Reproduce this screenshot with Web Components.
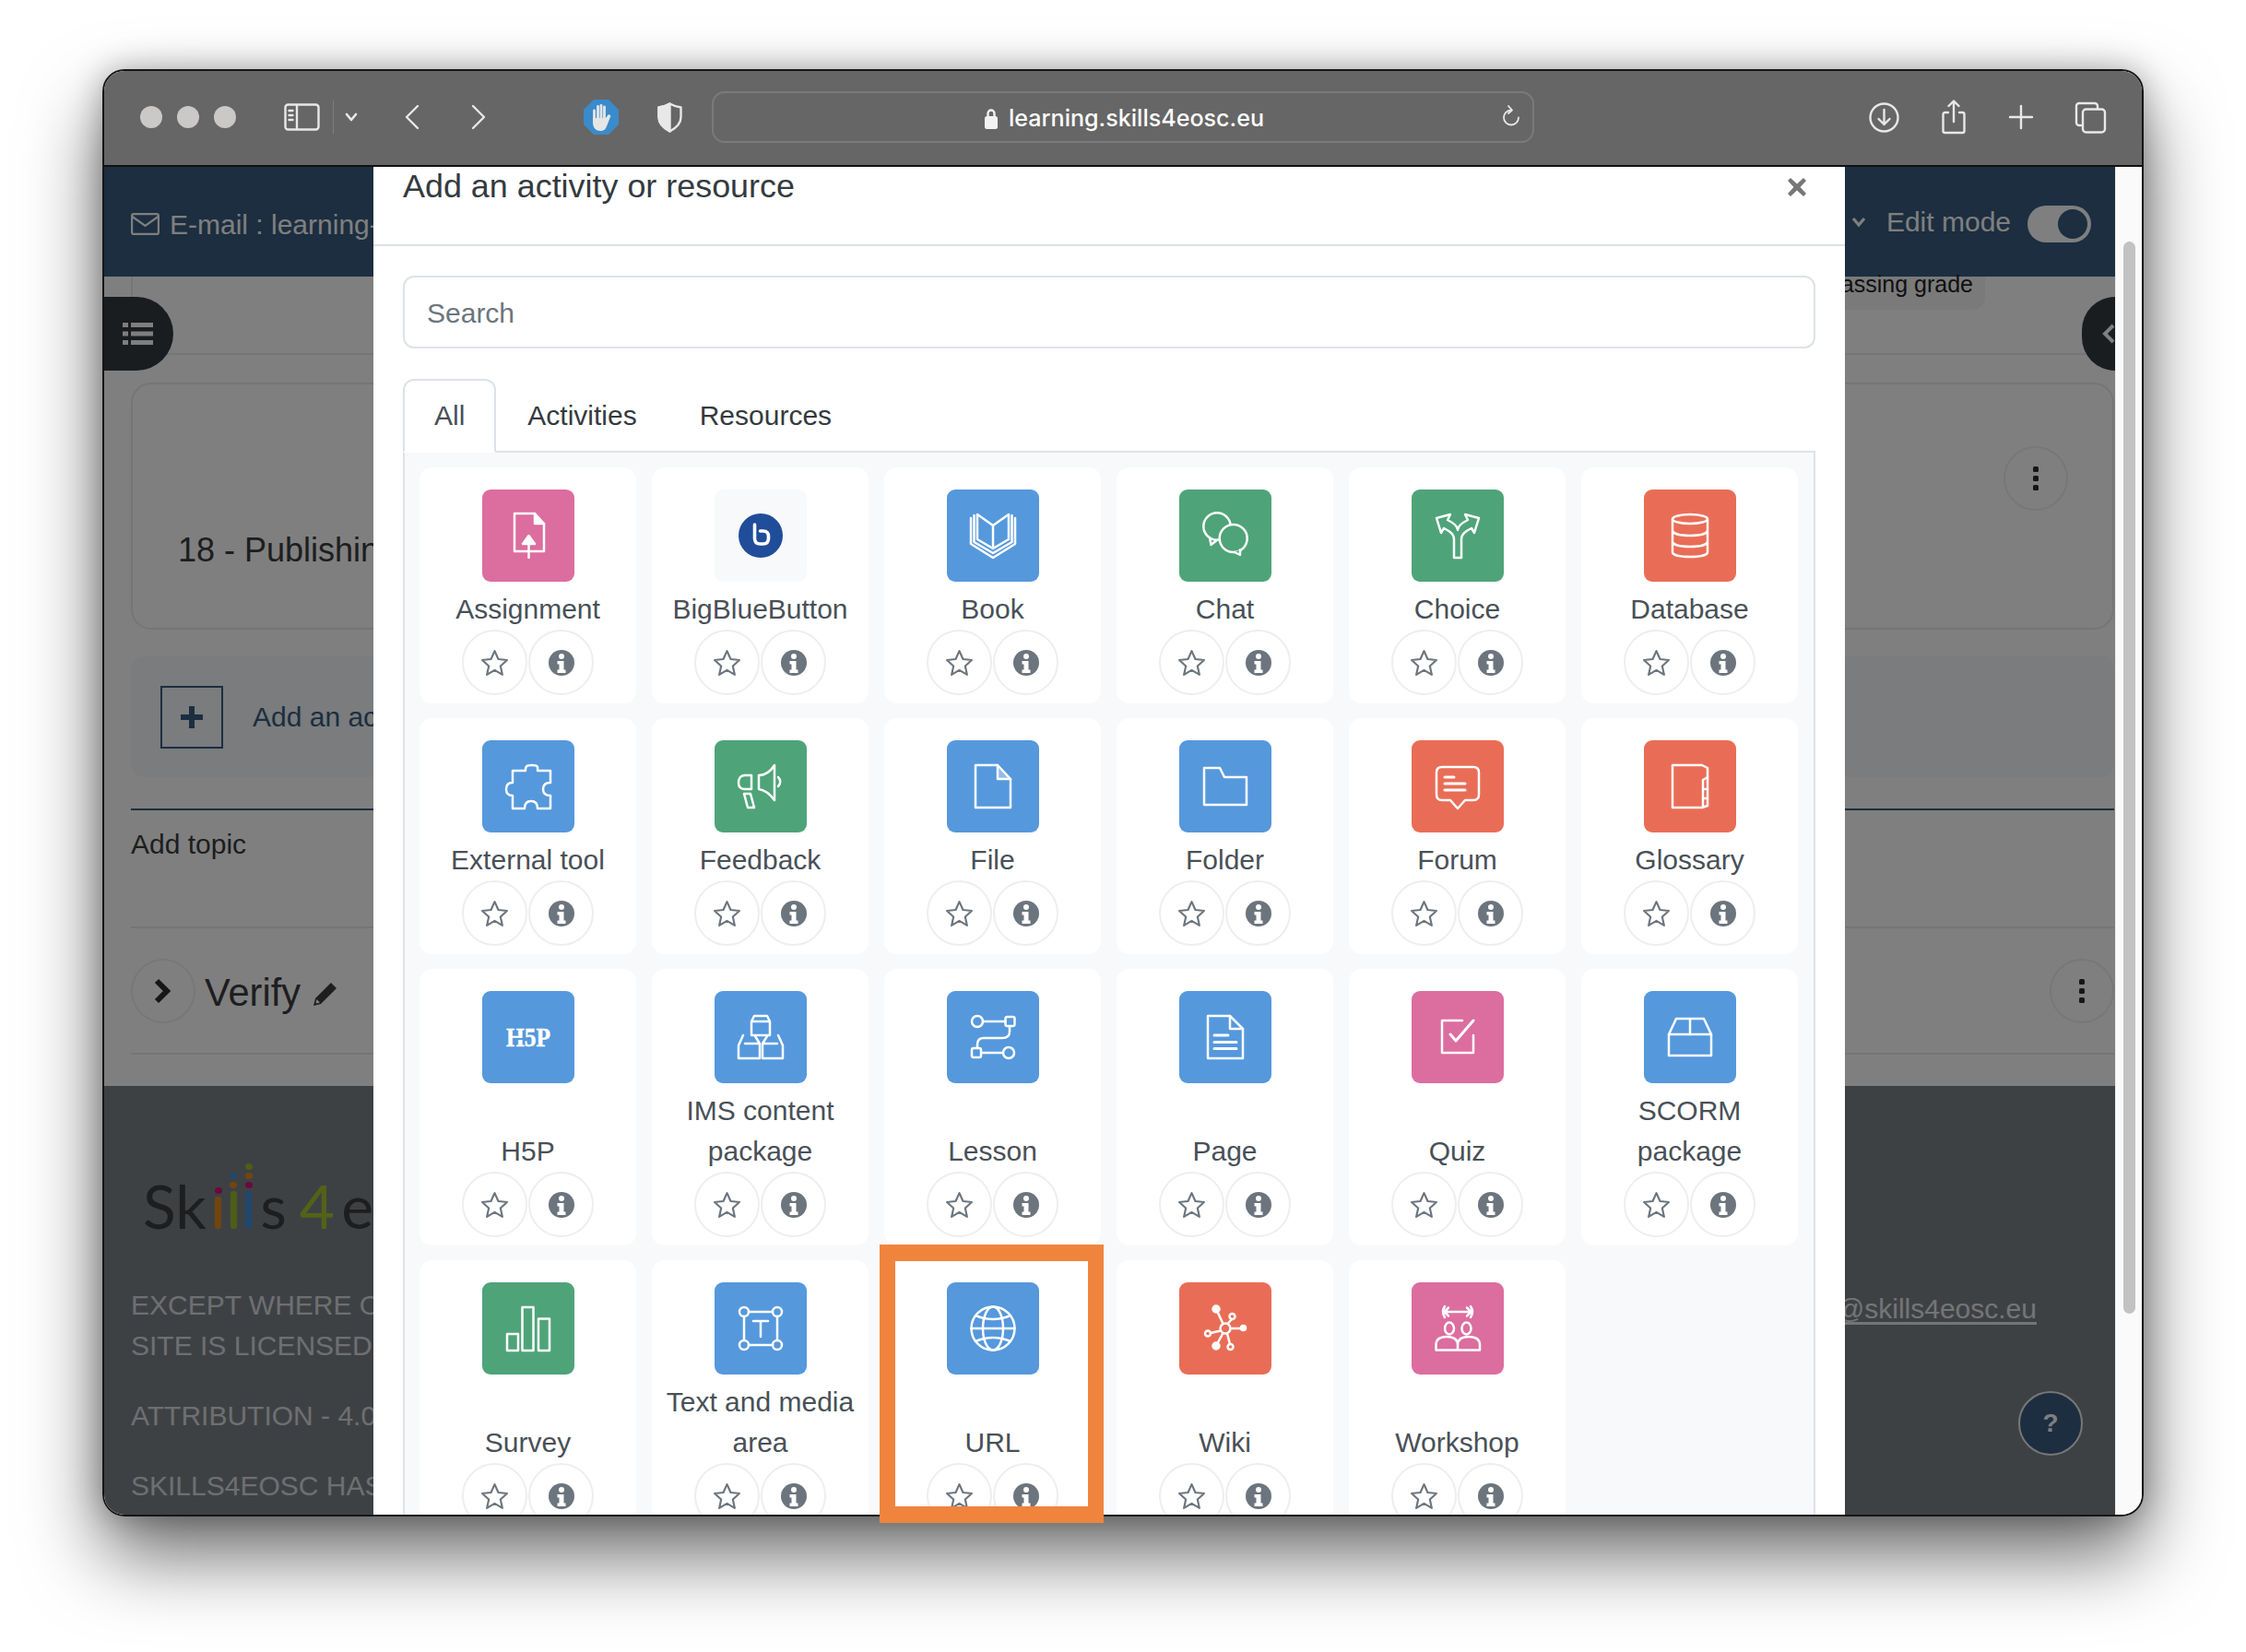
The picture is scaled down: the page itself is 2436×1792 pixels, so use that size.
<!DOCTYPE html>
<html>
<head>
<meta charset="utf-8">
<title>Add an activity or resource</title>
<style>
  html, body { margin: 0; height: 100%; overflow: hidden; background: #fff; font-family: "Liberation Sans", Arial, sans-serif; }
</style>
</head>
<body>
<mac-window>
  <browser-toolbar slot="toolbar" url="learning.skills4eosc.eu"></browser-toolbar>
  <course-page slot="page"></course-page>
  <activity-modal slot="modal">
    <activity-card name="Assignment" color="pink" icon="assignment"></activity-card>
    <activity-card name="BigBlueButton" color="plain" icon="bbb"></activity-card>
    <activity-card name="Book" color="blue" icon="book"></activity-card>
    <activity-card name="Chat" color="green" icon="chat"></activity-card>
    <activity-card name="Choice" color="green" icon="choice"></activity-card>
    <activity-card name="Database" color="coral" icon="database"></activity-card>
    <activity-card name="External tool" color="blue" icon="puzzle"></activity-card>
    <activity-card name="Feedback" color="green" icon="feedback"></activity-card>
    <activity-card name="File" color="blue" icon="file"></activity-card>
    <activity-card name="Folder" color="blue" icon="folder"></activity-card>
    <activity-card name="Forum" color="coral" icon="forum"></activity-card>
    <activity-card name="Glossary" color="coral" icon="glossary"></activity-card>
    <activity-card name="H5P" color="blue" icon="h5p"></activity-card>
    <activity-card name="IMS content package" color="blue" icon="ims"></activity-card>
    <activity-card name="Lesson" color="blue" icon="lesson"></activity-card>
    <activity-card name="Page" color="blue" icon="page"></activity-card>
    <activity-card name="Quiz" color="pink" icon="quiz"></activity-card>
    <activity-card name="SCORM package" color="blue" icon="scorm"></activity-card>
    <activity-card name="Survey" color="green" icon="survey"></activity-card>
    <activity-card name="Text and media area" color="blue" icon="textarea"></activity-card>
    <activity-card name="URL" color="blue" icon="url"></activity-card>
    <activity-card name="Wiki" color="coral" icon="wiki"></activity-card>
    <activity-card name="Workshop" color="pink" icon="workshop"></activity-card>
  </activity-modal>
  <highlight-box slot="overlay"></highlight-box>
</mac-window>

<script>
const SANS = '"Liberation Sans", Arial, sans-serif'

class MacWindow extends HTMLElement {
  constructor() {
    super()
    let shadow = this.attachShadow({ mode: 'open' })
    shadow.innerHTML = `
    <style>
      :host { display: block; position: relative; box-sizing: border-box; width: 2214px; height: 1570px; margin: 75px 0 0 111px; }
      .frame { position: relative; box-sizing: border-box; width: 100%; height: 100%; border: 2px solid #161616; border-radius: 24px; overflow: hidden;
        display: flex; flex-direction: column; background: #fafafa; }
      .shadow { position: absolute; inset: 0; border-radius: 24px; box-shadow: 0 42px 84px rgba(0,0,0,.58), 0 0 34px rgba(0,0,0,.28); }
      .content { flex: 1; min-height: 0; display: flex; position: relative; }
      .view { flex: 1; min-width: 0; position: relative; overflow: hidden; }
      .backdrop { position: absolute; inset: 0; background: rgba(0,0,0,.5); }
      .bar { width: 29px; background: #fafafa; border-left: 1px solid #ececec; box-sizing: border-box; padding: 81px 0 0 8px; }
      .thumb { width: 13px; height: 1163px; border-radius: 7px; background: #c2c2c2; }
      ::slotted([slot=overlay]) { position: absolute; left: 843px; top: 1275px; }
    </style>
    <div class="shadow"></div>
    <div class="frame">
      <slot name="toolbar"></slot>
      <div class="content">
        <div class="view">
          <slot name="page"></slot>
          <div class="backdrop"></div>
          <slot name="modal"></slot>
        </div>
        <div class="bar"><div class="thumb"></div></div>
      </div>
    </div>
    <slot name="overlay"></slot>
    `
  }
}
customElements.define('mac-window', MacWindow)

class BrowserToolbar extends HTMLElement {
  constructor() {
    super()
    this.attachShadow({ mode: 'open' })
  }

  connectedCallback() {
    let url = this.getAttribute('url')
    this.shadowRoot.innerHTML = `
    <style>
      :host { display: block; flex: none; }
      .bar { box-sizing: border-box; height: 104px; background: #666; border-bottom: 2px solid #111; display: flex; align-items: center; padding: 0 0 2px 39px; }
      .dot { width: 24px; height: 24px; border-radius: 50%; background: #cbc8c8; margin-right: 16px; flex: none; }
      svg { flex: none; display: block; fill: none; stroke: #e8e8e8; stroke-width: 2.4; stroke-linecap: round; stroke-linejoin: round; }
      .div { width: 1px; height: 36px; background: #7d7d7d; margin-left: 14px; }
      .url { flex: none; margin-left: 32px; box-sizing: border-box; width: 892px; height: 56px; border: 2px solid #7a7a7a; border-radius: 14px;
        position: relative; display: flex; align-items: center; justify-content: center; gap: 12px; padding: 2px 0 0 3px; }
      .url span { font: 500 25.100px Inter, ${SANS}; color: #fff; white-space: nowrap; }
      .url svg.reload { position: absolute; right: 13px; top: 13px; }
    </style>
    <div class="bar">
      <div class="dot"></div><div class="dot"></div><div class="dot" style="margin-right:0"></div>
      <svg style="margin-left:52px" width="39" height="30" viewBox="0 0 39 30"><rect x="1.500" y="1.500" width="36" height="27" rx="3"/><path d="M14 2V28M5.500 8h4M5.500 13h4M5.500 18h4"/></svg>
      <div class="div"></div>
      <svg style="margin-left:12px" width="14" height="10" viewBox="0 0 14 10"><path d="M2 2l5 6 5-6" stroke-width="2.600"/></svg>
      <svg style="margin-left:50px" width="17" height="28" viewBox="0 0 17 28"><path d="M15 2L3 14l12 12"/></svg>
      <svg style="margin-left:56px" width="17" height="28" viewBox="0 0 17 28"><path d="M2 2l12 12L2 26"/></svg>
      <svg style="margin-left:105px" width="38" height="38" viewBox="0 0 38 38"><path d="M11 0H27L38 11V27L27 38H11L0 27V11Z" fill="#3a8bcb" stroke="none"/><path d="M11.500 22V12M15.500 20V7.500M19 20V6.500M22.500 20V8" stroke="#e6e6e6" stroke-width="2.800"/><path d="M10 20H24L27 16 29.500 17.500 25 29C24 32 22 34 18 34 13 34 10 30 10 25Z" fill="#e6e6e6" stroke="none"/></svg>
      <svg style="margin-left:42px" width="27" height="33" viewBox="0 0 27 33"><path d="M13.500 1.500C18 4 21 5 25.500 5.500V16C25.500 23 20 28 13.500 31.500 7 28 1.500 23 1.500 16V5.500C6 5 9 4 13.500 1.500Z"/><path d="M13.500 1.500V31.500C7 28 1.500 23 1.500 16V5.500C6 5 9 4 13.500 1.500Z" fill="#e8e8e8"/></svg>
      <div class="url">
        <svg width="14" height="23" viewBox="0 0 14 23"><path d="M3.500 10V6a3.500 3.500 0 017 0v4" stroke="#f2f2f2"/><rect x="0" y="9" width="14" height="14" rx="2.500" fill="#f2f2f2" stroke="none"/></svg>
        <span>${url}</span>
        <svg class="reload" width="20" height="26" viewBox="0 0 20 26"><path d="M10 5.500a8 8 0 108 8" stroke-width="1.800"/><path d="M7 1l4 4.500-4 3.500" stroke-width="1.800"/></svg>
      </div>
      <svg style="margin-left:363px" width="33" height="33" viewBox="0 0 33 33"><circle cx="16.500" cy="16.500" r="15"/><path d="M16.500 8V24M10.500 18l6 6 6-6"/></svg>
      <svg style="margin-left:46px" width="26" height="38" viewBox="0 0 26 38"><path d="M7 14H3.500a2 2 0 00-2 2V34a2 2 0 002 2h19a2 2 0 002-2V16a2 2 0 00-2-2H19"/><path d="M13 24V2M7.500 7L13 1.500 18.500 7"/></svg>
      <svg style="margin-left:46px" width="28" height="28" viewBox="0 0 28 28"><path d="M14 2V26M2 14H26"/></svg>
      <svg style="margin-left:44px" width="35" height="35" viewBox="0 0 35 35"><path d="M7 26H5a3 3 0 01-3-3V5a3 3 0 013-3h17a3 3 0 013 3v3"/><rect x="9" y="8.500" width="24" height="25" rx="3.500"/></svg>
    </div>
    `
  }
}
customElements.define('browser-toolbar', BrowserToolbar)

class CoursePage extends HTMLElement {
  constructor() {
    super()
    let shadow = this.attachShadow({ mode: 'open' })
    shadow.innerHTML = `
    <style>
      :host { display: flex; flex-direction: column; height: 100%; background: #fff; color: #3b3d40; font: 30px/44px ${SANS}; position: relative; }
      svg { display: block; flex: none; }
      header { flex: none; box-sizing: border-box; height: 119px; background: #385c80; color: #fff; display: flex; align-items: center; padding: 0 26px 0 29px; }
      header .mail { margin: 4px 11px 0 0; }
      header .email { margin-top: 7px; }
      header .right { margin-left: auto; display: flex; align-items: center; }
      header .edit { margin: 0 18px 0 21px; }
      .toggle { box-sizing: border-box; width: 69px; height: 40px; border-radius: 20px; background: #fff; padding: 4px 4px 0 0; display: flex; justify-content: flex-end; margin-top: 4px; }
      .toggle i { display: block; width: 32px; height: 32px; border-radius: 50%; background: #385c80; }
      main { flex: none; padding: 0 1px 0 29px; }
      .top { box-sizing: border-box; height: 85px; border-left: 2px solid #ececec; border-bottom: 2px solid #ececec; display: flex; justify-content: flex-end; }
      .pill { box-sizing: border-box; height: 36px; border-radius: 0 0 14px 14px; background: #f5f5f5; color: #222; font-size: 25px; line-height: 16px; padding-right: 13px; margin-right: 140px; white-space: nowrap; }
      .section { box-sizing: border-box; height: 268px; margin-top: 30px; border: 2px solid #ebebeb; border-radius: 22px; display: flex; justify-content: space-between; padding: 0 48px 0 49px; }
      .section .title { font-size: 36px; line-height: 54px; margin-top: 153px; }
      .round { box-sizing: border-box; width: 70px; height: 70px; border-radius: 50%; border: 2px solid #efefef; display: flex; align-items: center; justify-content: center; flex: none; }
      .section .round { margin-top: 67px; }
      .add { box-sizing: border-box; height: 131px; margin-top: 29px; background: #f5f8fb; border-radius: 14px; display: flex; align-items: center; padding-left: 32px; color: #385c80; }
      .plus { box-sizing: border-box; width: 68px; height: 68px; border: 2px solid #385c80; display: flex; align-items: center; justify-content: center; margin-right: 32px; }
      .topic { margin-top: 34px; height: 130px; box-sizing: border-box; border-top: 2px solid #385c80; border-bottom: 2px solid #ebebeb; padding-top: 15px; }
      .verify { box-sizing: border-box; height: 137px; border-bottom: 2px solid #ebebeb; display: flex; align-items: center; }
      .verify b { font-weight: 400; font-size: 41.600px; line-height: 48px; margin: 4px 13px 0 10px; color: #3b3d40; }
      .verify .pen { margin-top: 6px; }
      .verify .round:last-child { margin-left: auto; }
      footer { flex: 1; min-height: 0; margin-top: 34px; background: #7c8289; color: #dcdfe2; display: flex; justify-content: space-between; padding: 77px 85px 0 29px; position: relative; overflow: hidden; white-space: nowrap; }
      .logo { height: 86px; display: flex; align-items: flex-end; font: 400 66px/66px Lato, ${SANS}; color: #3c3d3f; padding-left: 13px; }
      .logo span { display: block; }
      .stack { display: flex; flex-direction: column; align-items: center; gap: 3px; margin-bottom: 8px; width: 7px; margin-left: 9.500px; }
      .stack i { display: block; width: 8px; height: 7px; border-radius: 50%; flex: none; }
      .stack u { display: block; width: 7px; border-radius: 3px; text-decoration: none; }
      .legal { margin: 53px 0 0; }
      .legal p { margin: 0 0 32px; }
      .mailto { padding-top: 143px; }
      .mailto a { color: #e8eaec; text-decoration: underline; text-underline-offset: 4px; }
      .help { position: absolute; right: 35px; top: 331px; box-sizing: border-box; width: 70px; height: 70px; border-radius: 50%; background: #385c80; border: 2px solid #eee; color: #fff; font: 700 28px/66px ${SANS}; text-align: center; }
      .drawer { position: absolute; top: 141px; height: 80px; background: #343a40; display: flex; align-items: center; }
      .drawer.left { left: 0; width: 75px; border-radius: 0 40px 40px 0; padding-left: 20px; box-sizing: border-box; }
      .drawer.right { right: 0; width: 36px; border-radius: 40px 0 0 40px; padding-left: 22px; box-sizing: border-box; }
    </style>
    <header>
      <svg class="mail" width="31" height="24" viewBox="0 0 31 24" fill="none" stroke="#fff" stroke-width="2.200"><rect x="1.100" y="1.100" width="28.800" height="21.800" rx="2"/><path d="M1.500 4L15.500 14 29.500 4"/></svg>
      <span class="email">E-mail : learning-</span>
      <div class="right">
        <svg width="18" height="14" viewBox="0 0 18 14" fill="none" stroke="#fff" stroke-width="3.200"><path d="M3 3l6 7 6-7"/></svg>
        <span class="edit">Edit mode</span>
        <div class="toggle"><i></i></div>
      </div>
    </header>
    <main>
      <div class="top"><div class="pill">passing grade</div></div>
      <div class="section">
        <div class="title">18 - Publishing</div>
        <div class="round"><svg width="8" height="28" viewBox="0 0 8 28" fill="#2a2c2e"><rect x="1" y="1" width="6" height="6" rx="1.500"/><rect x="1" y="11" width="6" height="6" rx="1.500"/><rect x="1" y="21" width="6" height="6" rx="1.500"/></svg></div>
      </div>
      <div class="add">
        <div class="plus"><svg width="26" height="26" viewBox="0 0 26 26" fill="#385c80"><path d="M10 1h6v9h9v6h-9v9h-6v-9H1v-6h9z"/></svg></div>
        <span>Add an activity</span>
      </div>
      <div class="topic">Add topic</div>
      <div class="verify">
        <div class="round"><svg width="20" height="28" viewBox="0 0 20 28" fill="none" stroke="#2a2c2e" stroke-width="6"><path d="M3 3l11 11L3 25"/></svg></div>
        <b>Verify</b>
        <svg class="pen" width="28" height="28" viewBox="0 0 28 28" fill="#3b3d40"><path d="M20 2l6 6L9 25l-8 2 2-8zM4.500 20l-1 3.500 1 1 3.500-1z"/></svg>
        <div class="round"><svg width="8" height="28" viewBox="0 0 8 28" fill="#2a2c2e"><rect x="1" y="1" width="6" height="6" rx="1.500"/><rect x="1" y="11" width="6" height="6" rx="1.500"/><rect x="1" y="21" width="6" height="6" rx="1.500"/></svg></div>
      </div>
    </main>
    <footer>
      <div>
        <div class="logo">
          <span>Sk</span>
          <div class="stack"><i style="background:#d6127e"></i><u style="height:35px;background:#e58a1f"></u></div>
          <div class="stack"><i style="background:#3f90d8"></i><i style="background:#e58a1f"></i><u style="height:41px;background:#9dbb2e"></u></div>
          <div class="stack"><i style="background:#9dbb2e"></i><i style="background:#e58a1f"></i><i style="background:#d6127e"></i><u style="height:41px;background:#3f90d8"></u></div>
          <span style="margin-left:9px">s</span>
          <span style="margin-left:14px;color:#a9c52f">4</span>
          <span style="margin-left:7px">e</span>
        </div>
        <div class="legal">
          <p>EXCEPT WHERE OTHERWISE<br>SITE IS LICENSED</p>
          <p>ATTRIBUTION - 4.0</p>
          <p>SKILLS4EOSC HAS</p>
        </div>
      </div>
      <div class="mailto"><a>@skills4eosc.eu</a></div>
      <div class="help">?</div>
    </footer>
    <div class="drawer left"><svg width="33" height="26" viewBox="0 0 33 26" fill="#fff"><path d="M0 1h6v5H0zM9 1h24v5H9zM0 10.500h6v5H0zM9 10.500h24v5H9zM0 20h6v5H0zM9 20h24v5H9z"/></svg></div>
    <div class="drawer right"><svg width="14" height="22" viewBox="0 0 14 22" fill="none" stroke="#fff" stroke-width="4"><path d="M12 2L3 11l9 9"/></svg></div>
    `
  }
}
customElements.define('course-page', CoursePage)

class ActivityModal extends HTMLElement {
  constructor() {
    super()
    let shadow = this.attachShadow({ mode: 'open' })
    shadow.innerHTML = `
    <style>
      :host { position: absolute; left: 292px; top: 0; bottom: 0; width: 1596px; background: #fff; overflow: hidden; display: block; color: #343a40; font: 30px/44px ${SANS}; }
      .head { box-sizing: border-box; height: 86px; border-bottom: 2px solid #dee2e6; display: flex; justify-content: space-between; padding: 0 42px 0 32px; }
      h5 { margin: 0; font: 400 35.900px/42px ${SANS}; white-space: nowrap; }
      .head svg { margin-top: 12px; }
      .body { padding: 32px 32px 0; }
      .search { box-sizing: border-box; height: 79px; border: 2px solid #dee2e6; border-radius: 12px; padding: 0 24px; line-height: 77px; color: #6c757d; }
      .tabs { display: flex; margin-top: 33px; }
      .tab { box-sizing: border-box; height: 80px; padding: 0 34px; line-height: 76px; border: 2px solid transparent; border-width: 2px 0; margin-bottom: -2px; }
      .tab.active { color: #495057; padding: 0 32px; border: 2px solid; border-color: #dee2e6 #dee2e6 #fff; border-radius: 12px 12px 0 0; position: relative; background: #fff; }
      .panel { box-sizing: border-box; background: #f8f9fa; border: 2px solid #dee2e6; border-bottom: 0; padding: 16px 16px 40px; display: grid; grid-template-columns: repeat(6, 235px); column-gap: 17px; row-gap: 16px; }
    </style>
    <div class="head">
      <h5>Add an activity or resource</h5>
      <svg width="20" height="20" viewBox="0 0 20 20" fill="#767676"><path d="M3 0l7 6.500L17 0l3 3-6.500 7 6.500 7-3 3-7-6.500L3 20l-3-3 6.500-7L0 3z"/></svg>
    </div>
    <div class="body">
      <div class="search">Search</div>
      <div class="tabs">
        <div class="tab active">All</div>
        <div class="tab">Activities</div>
        <div class="tab">Resources</div>
      </div>
      <div class="panel"><slot></slot></div>
    </div>
    `
  }
}
customElements.define('activity-modal', ActivityModal)

const COLORS = { pink: '#dc6d9f', blue: '#5598dc', green: '#4ea478', coral: '#e96d56', plain: '#f8f9fa' }

// glyphs are drawn on the 100x100 tile, coordinates measured from the reference
const ICONS = {
  assignment: `<path d="M35 67V26H57L67 37V67H35"/><path d="M57 26V37H67" fill="#fff"/><path d="M50.500 58V74"/><path d="M44 59L50.500 50 57 59Z" fill="#fff"/>`,
  bbb: `<circle cx="50" cy="50" r="24" fill="#204d99" stroke="none"/><path d="M43.500 38V53q0 6 6 6h3q6 0 6-6v-2q0-6-6-6h-3" stroke-width="3.600"/>`,
  book: `<path d="M26 31V59L50 74 74 59V31"/><path d="M29.500 28V57L50 69 70.500 57V28"/><path d="M33 27V54L50 64 67 54V27L50 39Z"/><path d="M50 39V64"/>`,
  chat: `<circle cx="41" cy="40" r="14.700"/><path d="M33 52L34.500 60 41 54.700"/><circle cx="58.700" cy="53" r="15" fill="var(--tile)"/><path d="M60 68L66 71 66 65.500" fill="var(--tile)"/>`,
  choice: `<path d="M46 74V54C46 48 41 45 35 42L32 47 27 31 42 27 39 33C45 36 50 40 50 44 50 40 55 36 61 33L58 27 73 31 68 47 65 42C59 45 54 48 54 54V74Z"/>`,
  database: `<ellipse cx="50" cy="32" rx="19" ry="5"/><path d="M31 32V68C31 71 39 73 50 73 61 73 69 71 69 68V32M31 44C31 48 39 50 50 50 61 50 69 48 69 44M31 56C31 60 39 62 50 62 61 62 69 60 69 56"/>`,
  puzzle: `<path d="M33 33H47C47 30 46 27 54 27 62 27 60 30 60 33H74V46C68 46 66 49 66 53 66 57 68 60 74 60V74H60C60 68 57 66 53 66 49 66 46 68 46 74H33V60C28 60 26 57 26 53 26 49 28 46 33 46Z"/>`,
  feedback: `<path d="M65 27C60 35 54 38 48 38V53C54 54 60 58 65 65Z"/><path d="M40 38H33C28 38 26 42 26 46 26 50 28 53 33 53H40Z"/><path d="M32 58H39L43 73H36Z"/><path d="M69 40C72 43 72 47 69 50"/>`,
  file: `<path d="M31 27H55L69 42V73H31Z"/><path d="M55 27V42H69" fill="#fff" fill-opacity=".35"/>`,
  folder: `<path d="M27 30H44L49 40H73V70H27Z"/>`,
  forum: `<path d="M33 29H67Q73 29 73 35V59Q73 65 67 65H58L50 74 42 65H33Q27 65 27 59V35Q27 29 33 29Z"/><path d="M36 40H46M36 47H58M36 54H58" stroke-width="3"/>`,
  glossary: `<path d="M31 27H63L69 30V71L63 73H31Z"/><path d="M64 43L69 40M64 43V72M64 53H69M64 63H69"/>`,
  h5p: `<text x="50" y="60" text-anchor="middle" textLength="48" lengthAdjust="spacingAndGlyphs" font-family="Liberation Serif, serif" font-weight="700" font-size="29" fill="#fff" stroke="#fff" stroke-width=".5">H5P</text><path d="M38 52H45" stroke="var(--tile)" stroke-width="2"/>`,
  ims: `<path d="M40 33L43 27H57L60 33V48H40ZM40 33H60"/><path d="M31 48L26 59V73H49V57H33M49 57L44 49"/><path d="M69 48L74 59V73H52V57H68M52 57L57 49"/>`,
  lesson: `<circle cx="33" cy="33" r="6"/><rect x="63.500" y="28" width="10" height="10" rx="2"/><path d="M39 33H63.500M68 38V44Q68 51 60 51H40Q33 51 33 58V62M38 67H61"/><rect x="27" y="62" width="10" height="10" rx="2"/><circle cx="67" cy="67" r="6"/>`,
  page: `<path d="M31 27H55L69 41V73H31Z"/><path d="M55 27V41H69"/><path d="M38 48H53M38 55.500H62M38 62.500H62" stroke-width="3"/>`,
  quiz: `<path d="M55 32H33V67H67V48"/><path d="M42 47L48 54 67 32" stroke-width="3"/>`,
  scorm: `<path d="M27 47L35 30H65L73 47M50 30V47"/><rect x="27" y="47" width="46" height="23"/>`,
  survey: `<rect x="27" y="56" width="12" height="18"/><rect x="43.500" y="27" width="12" height="47"/><rect x="61" y="39.500" width="12" height="34.500"/>`,
  textarea: `<circle cx="32" cy="32" r="5"/><circle cx="68" cy="32" r="5"/><circle cx="32" cy="68" r="5"/><circle cx="68" cy="68" r="5"/><path d="M37 32H63M37 68H63M32 37V63M68 37V63M42 42H58M50 42V59"/>`,
  url: `<circle cx="50" cy="50" r="23.500"/><ellipse cx="50" cy="50" rx="11" ry="23.500"/><path d="M26.500 50H73.500M31 36Q50 44 69 36M31 64Q50 56 69 64"/>`,
  wiki: `<circle cx="50" cy="50" r="5.500"/><path d="M47.500 45L41 31M52.500 45L57 40M55.500 50H67M45 52.500L34 55M47.500 55L41 67M52 55.500L55 67" /><circle cx="40" cy="29" r="3.500" fill="#fff"/><circle cx="57.500" cy="37" r="3"/><circle cx="69.500" cy="49.500" r="2.500" fill="#fff"/><circle cx="31" cy="55.500" r="3"/><circle cx="40" cy="69" r="3.500" fill="#fff"/><circle cx="55.500" cy="70" r="3"/>`,
  workshop: `<path d="M36 32H64M40 27.500L35.500 32 40 36.500M60 27.500L64.500 32 60 36.500M36 26Q32 32 36 38M64 26Q68 32 64 38" /><ellipse cx="41" cy="50" rx="5" ry="6.500"/><ellipse cx="59.500" cy="50" rx="5" ry="6.500"/><path d="M26.500 73.500V68Q26.500 59 38 59 50 59 50 68V73.500ZM50 68Q50 59 62 59 74 59 74 68V73.500H50" />`
}

class ActivityCard extends HTMLElement {
  constructor() {
    super()
    this.attachShadow({ mode: 'open' })
  }

  connectedCallback() {
    let name = this.getAttribute('name'),
      color = COLORS[this.getAttribute('color')],
      icon = ICONS[this.getAttribute('icon')]

    this.shadowRoot.innerHTML = `
    <style>
      :host { display: flex; flex-direction: column; align-items: center; box-sizing: border-box; background: #fff; border-radius: 14px; padding: 24px 8px 9px; color: #495057; font: 30px/44px ${SANS}; text-align: center; }
      .tile { --tile: ${color}; width: 100px; height: 100px; border-radius: 9px; background: var(--tile); flex: none; margin-bottom: 8px; }
      .tile svg { display: block; fill: none; stroke: #fff; stroke-width: 2.500; stroke-linejoin: round; stroke-linecap: round; }
      .name { margin-top: auto; }
      .actions { display: flex; gap: 1px; flex: none; }
      .btn { box-sizing: border-box; width: 71px; height: 71px; border: 2px solid #eee; border-radius: 50%; display: flex; align-items: center; justify-content: center; }
      .btn svg { display: block; }
    </style>
    <div class="tile"><svg width="100" height="100" viewBox="0 0 100 100">${icon}</svg></div>
    <div class="name">${name}</div>
    <div class="actions">
      <div class="btn"><svg width="29" height="28" viewBox="1 1 27 26" fill="none" stroke="#6c757d" stroke-width="2" stroke-linejoin="round"><path d="M14.500 2L18.200 10.300 27 11.200 20.400 17.200 22.300 26 14.500 21.400 6.700 26 8.600 17.200 2 11.200 10.800 10.300Z"/></svg></div>
      <div class="btn"><svg width="28" height="28" viewBox="0 0 28 28"><circle cx="14" cy="14" r="14" fill="#6c757d"/><circle cx="14" cy="7" r="3" fill="#fff"/><path d="M9.500 12h7v9.500h2V25h-9v-3.500h2V15.500h-2z" fill="#fff"/></svg></div>
    </div>
    `
  }
}
customElements.define('activity-card', ActivityCard)

class HighlightBox extends HTMLElement {
  constructor() {
    super()
    let shadow = this.attachShadow({ mode: 'open' })
    shadow.innerHTML = `
    <style>
      :host { display: block; box-sizing: border-box; width: 243px; height: 302px; border: 17px solid #f0843d; border-width: 18px 17px; }
    </style>
    `
  }
}
customElements.define('highlight-box', HighlightBox)
</script>
</body>
</html>
